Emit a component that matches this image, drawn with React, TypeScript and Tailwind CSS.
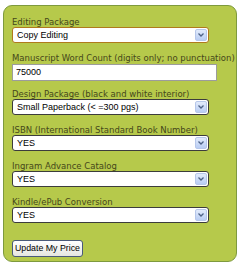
const labelCls =
	'block h-[10px] text-[8.5px] leading-[10px] text-[#45471a] whitespace-nowrap';
const font = { fontFamily: '"DejaVu Sans", Verdana, sans-serif' };
const arial = { fontFamily: '"Liberation Sans", Arial, sans-serif' };

const FakeSelect = ({ value, focused }: { value: string; focused?: boolean }) => (
	<div
		className={`flex items-center justify-between w-[197px] h-[16px] rounded-[3px] bg-white border ${
			focused ? 'border-[#b07a1c]' : 'border-[#3c3c3c]'
		}`}>
		<span className="pl-[4px] text-[9px] leading-[14px] text-black" style={arial}>
			{value}
		</span>
		<span className="mr-[1px] flex items-center justify-center w-[12px] h-[12px] rounded-[2px] bg-gradient-to-b from-[#e2ebfb] to-[#b9cdf3] border border-[#b6c7ea]">
			<svg width="6" height="4" viewBox="0 0 6 4">
				<path d="M0.5 0.5 L3 3 L5.5 0.5" fill="none" stroke="#4d6185" strokeWidth="1.3" />
			</svg>
		</span>
	</div>
);

const Field = ({ label, children }: { label: string; children: React.ReactNode }) => (
	<div className="flex flex-col h-[36px]">
		<label className={labelCls} style={font}>
			{label}
		</label>
		{children}
	</div>
);

export default function App() {
	return (
		<div className="w-[240px] h-[266px] bg-white pt-[5px] pl-[3px]">
			<div className="w-[234px] h-[257px] rounded-[9px] border border-[#7e9a3e] bg-[#b6c94b] pt-[11px] pl-[8px]">
				<Field label="Editing Package">
					<FakeSelect value="Copy Editing" focused />
				</Field>
				<Field label="Manuscript Word Count (digits only; no punctuation)">
					<div className="w-[205px] h-[17px] mt-[1px] bg-white border border-[#9c9c9c] flex items-center">
						<span className="pl-[3px] text-[9px] text-black" style={arial}>
							75000
						</span>
					</div>
				</Field>
				<Field label="Design Package (black and white interior)">
					<FakeSelect value="Small Paperback (< =300 pgs)" />
				</Field>
				<Field label="ISBN (International Standard Book Number)">
					<FakeSelect value="YES" />
				</Field>
				<Field label="Ingram Advance Catalog">
					<FakeSelect value="YES" />
				</Field>
				<Field label="Kindle/ePub Conversion">
					<FakeSelect value="YES" />
				</Field>
				<button
					className="mt-[2px] h-[17px] w-[71px] rounded-[3px] border border-[#4a5a7a] bg-gradient-to-b from-white to-[#e6e6e0] text-[8.8px] leading-[15px] text-black"
					style={arial}>
					Update My Price
				</button>
			</div>
		</div>
	);
}
